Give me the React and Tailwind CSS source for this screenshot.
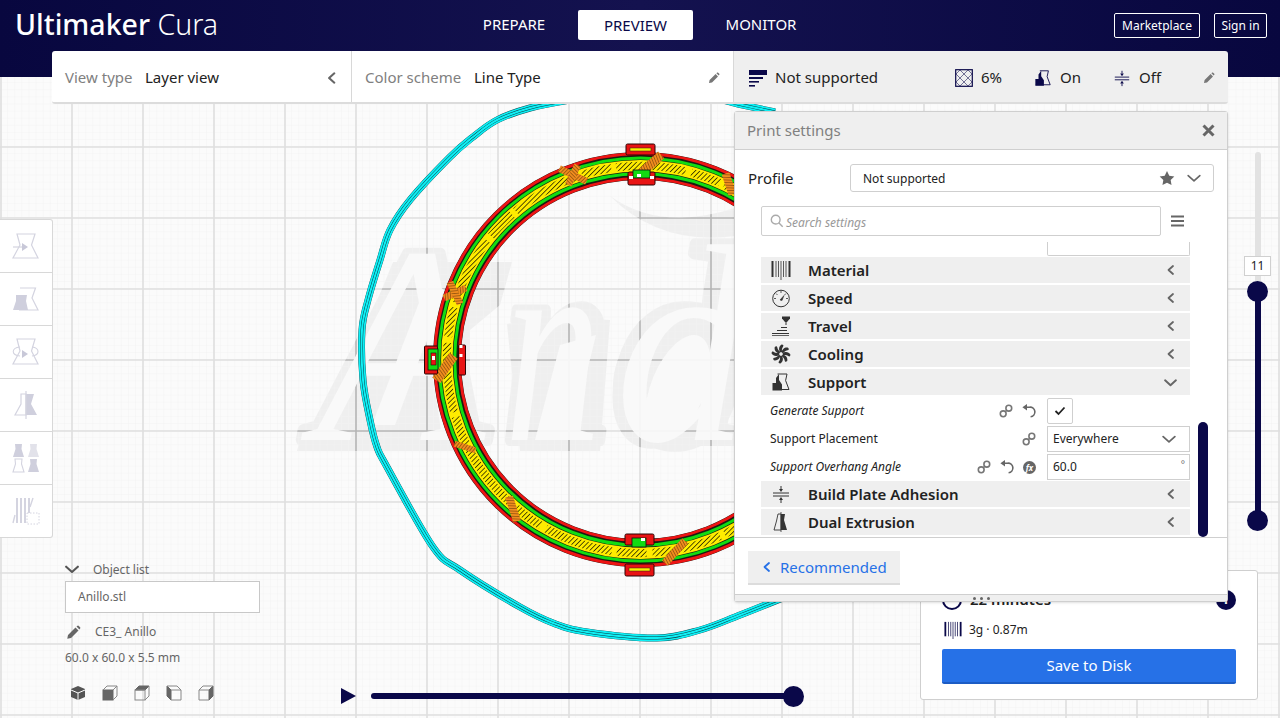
import React from "react";

const NAVY = "#0a0849";

function smooth(pts) {
  let d = `M${pts[0][0]} ${pts[0][1]}`;
  for (let i = 0; i < pts.length - 1; i++) {
    const p0 = pts[Math.max(i - 1, 0)];
    const p1 = pts[i];
    const p2 = pts[i + 1];
    const p3 = pts[Math.min(i + 2, pts.length - 1)];
    const c1 = [p1[0] + (p2[0] - p0[0]) / 6, p1[1] + (p2[1] - p0[1]) / 6];
    const c2 = [p2[0] - (p3[0] - p1[0]) / 6, p2[1] - (p3[1] - p1[1]) / 6];
    d += ` C${c1[0].toFixed(1)} ${c1[1].toFixed(1)} ${c2[0].toFixed(1)} ${c2[1].toFixed(1)} ${p2[0]} ${p2[1]}`;
  }
  return d;
}

function Viewport() {
  const xs = Array.from({ length: 19 }, (_, i) => 1 + 71 * i);
  const ys = Array.from({ length: 11 }, (_, i) => 5 + 71 * i);
  const skirt = smooth([
    [775, 112], [738, 104], [700, 95], [640, 90], [570, 100], [530, 108], [497, 120], [473, 137], [450, 157],
    [410, 200], [390, 230], [380, 260], [368, 300], [362, 330], [363, 380], [370, 420], [377, 447], [387, 467],
    [433, 547], [460, 570], [520, 607], [553, 623], [587, 632], [657, 638], [700, 630], [740, 615], [790, 595],
  ]);
  const Grid = () => (
    <>
      {xs.map((x) => <line key={"x" + x} x1={x} x2={x} y1="0" y2="718" />)}
      {ys.map((y) => <line key={"y" + y} y1={y} y2={y} x1="0" x2="1280" />)}
    </>
  );
  const Orange = ({ x, y, r, l = 28, w = 9 }) => (
    <rect x={x - l / 2} y={y - w / 2} width={l} height={w} fill="url(#orangeHatch)" transform={`rotate(${r} ${x} ${y})`} />
  );
  const Tab = ({ x, y, w, h }) => (
    <g>
      <rect x={x} y={y} width={w} height={h} rx="1.5" fill="#e81313" stroke="#2a0505" strokeWidth="1" />
      <rect x={x + 4} y={y + 4} width={w - 8} height="3" fill="#ffee00" stroke="#222" strokeWidth=".5" />
    </g>
  );
  const Letters = ({ weight }) => (
    <>
      <text transform="translate(316 440) scale(.98 1)" fontWeight={weight}>A</text>
      <text transform="translate(505 440) scale(.68 1)" fontWeight={weight}>n</text>
      <text transform="translate(615 440) scale(.95 1)" fontWeight={weight}>d</text>
    </>
  );
  return (
    <svg className="absolute inset-0" width="1280" height="718" viewBox="0 0 1280 718">
      <defs>
        <pattern id="minor" width="7.1" height="7.1" patternUnits="userSpaceOnUse" x="1" y="5">
          <path d="M7.1 0V7.1M0 7.1H7.1" stroke="#f3f3f3" strokeWidth="1" fill="none" />
        </pattern>
        <pattern id="hatch" width="3.4" height="3.4" patternUnits="userSpaceOnUse" patternTransform="rotate(45)">
          <rect width="3.4" height="3.4" fill="#ffec00" />
          <rect width=".8" height="3.4" fill="#2b2b00" />
        </pattern>
        <pattern id="orangeHatch" width="2.6" height="2.6" patternUnits="userSpaceOnUse" patternTransform="rotate(20)">
          <rect width="2.6" height="2.6" fill="#f08c1e" />
          <rect width=".7" height="2.6" fill="#8a4d0c" />
        </pattern>
        <mask id="ghost">
          <rect width="1280" height="718" fill="black" />
          <g fontFamily="'Liberation Serif',serif" fontStyle="italic" fontSize="282" fill="white" stroke="white" strokeWidth="12" strokeLinejoin="round">
            <Letters weight="700" />
          </g>
          <g fill="white">
            <path d="M393 262 H512 L500 305 L470 330 L470 451 H297 L300 440 L327 420 L353 360 Z" />
            <path d="M507 324 L560 317 L610 320 L600 451 H520 Z" />
            <ellipse cx="675" cy="386" rx="62" ry="66" />
          </g>
          <path d="M610 196 Q660 232 735 208 V236 Q660 246 610 196Z" fill="white" />
        </mask>
      </defs>
      <rect width="1280" height="718" fill="#fbfbfb" />
      <rect width="1280" height="718" fill="url(#minor)" />
      <g stroke="#dfdfdf" strokeWidth="1.6"><Grid /></g>

      <g mask="url(#ghost)">
        <rect width="1280" height="718" fill="#efefef" />
        <rect width="1280" height="718" fill="url(#minor)" opacity=".9" />
        <g stroke="#b4b4b4" strokeWidth="1.6"><Grid /></g>
      </g>
      <g fill="#fafafa" opacity=".94">
        <g fontFamily="'Liberation Serif',serif" fontStyle="italic" fontSize="282">
          <Letters weight="400" />
        </g>
        <ellipse cx="678" cy="388" rx="27" ry="56" transform="rotate(22 678 388)" />
        <path d="M427 282 L445 290 L395 425 L372 425 Z" />
        <path d="M560 345 L596 335 L570 440 L535 440 Z" />
      </g>

      <path d={skirt} fill="none" stroke="#0b4a52" strokeWidth="7" />
      <path d={skirt} fill="none" stroke="#0ff0f5" strokeWidth="6.4" />
      <path d={skirt} fill="none" stroke="#0b3a42" strokeWidth="2.9" />
      <path d={skirt} fill="none" stroke="#0ff0f5" strokeWidth="2" />

      <g fill="none">
        <circle cx="640.5" cy="359.5" r="193.5" stroke="#1b1b12" strokeWidth="28" />
        <circle cx="640.5" cy="359.5" r="205.8" stroke="#ee1414" strokeWidth="2.8" />
        <circle cx="640.5" cy="359.5" r="181.2" stroke="#ee1414" strokeWidth="2.8" />
        <circle cx="640.5" cy="359.5" r="201.6" stroke="#12dc12" strokeWidth="3" />
        <circle cx="640.5" cy="359.5" r="185.8" stroke="#12dc12" strokeWidth="3" />
        <circle cx="640.5" cy="359.5" r="193.7" stroke="#ffec00" strokeWidth="11.4" />
        <circle cx="640.5" cy="359.5" r="193.7" stroke="url(#hatch)" strokeWidth="8" strokeDasharray="70 6 30 5" />
      </g>

      <Orange x={573} y={175} r={25} l={30} w={7} />
      <Orange x={573} y={175} r={115} l={22} w={7} />
      <Orange x={650} y={165} r={-42} l={30} w={9} />
      <Orange x={729} y={184} r={72} l={22} w={8} />
      <Orange x={455} y={293} r={-25} l={24} w={7} />
      <Orange x={455} y={293} r={65} l={24} w={7} />
      <Orange x={445} y={368} r={-55} l={30} w={10} />
      <Orange x={465} y={447} r={18} l={22} w={6} />
      <Orange x={513} y={509} r={72} l={26} w={8} />
      <Orange x={675} y={552} r={-48} l={30} w={8} />

      <Tab x={626} y={144} w={29} h={11} />
      <rect x="628" y="172" width="27" height="13" rx="1.5" fill="#e81313" stroke="#2a0505" />
      <rect x="633" y="170" width="17" height="8" fill="#12dc12" stroke="#111" strokeWidth=".8" />
      <rect x="629" y="176" width="4" height="3" fill="#fff" />
      <rect x="650" y="176" width="4" height="3" fill="#fff" />
      <rect x="637" y="174" width="4" height="3" fill="#fff" />

      <Tab x={625} y={564} w={29} h={12} />
      <rect x="625" y="534" width="29" height="11" rx="1.5" fill="#e81313" stroke="#2a0505" />
      <rect x="632" y="538" width="14" height="9" fill="#12dc12" stroke="#111" strokeWidth=".8" />
      <rect x="641" y="538" width="4" height="3" fill="#fff" />

      <rect x="424.5" y="346" width="13" height="28" rx="1" fill="#e81313" stroke="#2a0505" />
      <rect x="428" y="349" width="10" height="21" fill="#12dc12" stroke="#111" strokeWidth=".8" />
      <rect x="431" y="353" width="5" height="12" fill="#e81313" stroke="#111" strokeWidth=".6" />
      <rect x="432" y="356" width="3" height="4" fill="#fff" />
      <rect x="458.5" y="345" width="7" height="30" rx="1" fill="#e81313" stroke="#2a0505" />
      <rect x="459.5" y="354" width="3" height="3" fill="#fff" />
      <rect x="459.5" y="345" width="3" height="3" fill="#fff" />
    </svg>
  );
}

const Chev = ({ dir = "left", cls = "", color = "#666", size = 12, sw = 1.8 }) => {
  const d = { left: "M8 2 L3.5 6 L8 10", right: "M4 2 L8.5 6 L4 10", down: "M1 4 L6 8.5 L11 4" }[dir];
  return (
    <svg width={size} height={size} viewBox="0 0 12 12" className={cls}>
      <path d={d} fill="none" stroke={color} strokeWidth={sw} strokeLinecap="round" strokeLinejoin="round" />
    </svg>
  );
};

const Pencil = ({ size = 12, color = "#777" }) => (
  <svg width={size} height={size} viewBox="0 0 12 12">
    <path d="M1 11 L1.6 8 L7.6 2 L10 4.4 L4 10.4 Z M8.4 1.2 L9.2.6 Q9.8.3 10.2.7 L11.3 1.8 Q11.7 2.3 11.3 2.8 L10.7 3.6 Z" fill={color} />
  </svg>
);

const Support = ({ c = NAVY, s = 20 }) => (
  <svg width={s} height={s} viewBox="0 0 20 20">
    <path d="M6.5 2 H16 L14.6 8.5 L18 17.5 H2" fill="none" stroke={c} strokeWidth="1" />
    <path d="M1.5 18.5 V11 H5 V6 L8 2 V8 L11 12.5 V18.5 Z" fill={c} />
  </svg>
);
const Adhesion = ({ c = NAVY, s = 20 }) => (
  <svg width={s} height={s} viewBox="0 0 20 20" fill={c} stroke={c}>
    <path d="M2 9 H18 M2 12 H18" strokeWidth="1" fill="none" />
    <path d="M10 2 V5" strokeWidth="1" /><path d="M8 5 H12 L10 8 Z" stroke="none" />
    <path d="M10 16 V19" strokeWidth="1" /><path d="M8 16 H12 L10 13 Z" stroke="none" />
  </svg>
);
const Barcode = ({ c = "#333", s = 20 }) => (
  <svg width={s} height={s} viewBox="0 0 20 20" stroke={c} fill="none">
    <path d="M1.5 1 V17" strokeWidth="2" /><path d="M18.5 1 V17" strokeWidth="2" />
    <path d="M5 1 V17 M7.5 1 V17 M10 1 V20 M12.5 1 V17 M15 1 V17" strokeWidth=".8" />
  </svg>
);
const Gauge = () => (
  <svg width="20" height="20" viewBox="0 0 20 20" fill="none" stroke="#333">
    <circle cx="10" cy="10.5" r="8.3" strokeWidth="1" />
    <path d="M10 2.5 V5 M3 10.5 H5 M15 10.5 H17 M5 5.5 L6.5 7 M15 5.5 L13.5 7" strokeWidth=".8" />
    <path d="M9 12 L13 7.5 L11 12.5 Z" fill="#333" strokeWidth=".6" />
  </svg>
);
const Travel = () => (
  <svg width="20" height="20" viewBox="0 0 20 20" fill="#333">
    <path d="M11 .5 H19 V2.5 L16 6 H14 L11 2.5 Z" />
    <rect x="14.5" y="6" width="1" height="3" />
    <path d="M10 11 H16 V12 H10 Z M6 14 H16 V15 H6 Z M1 17 H18 V18 H1 Z M1 19 H18 V19.7 H1 Z" />
  </svg>
);
const Fan = () => (
  <svg width="20" height="20" viewBox="0 0 20 20" fill="#333">
    {[0, 45, 90, 135, 180, 225, 270, 315].map((a) => (
      <path key={a} d="M9.6 8.6 C7 6 8 2 10.6 .6 C12.6 .6 12.8 1.8 12 2.8 C10.6 4.6 10.8 6.6 11.2 8.6 Z" transform={`rotate(${a} 10 10)`} />
    ))}
    <circle cx="10" cy="10" r="1.7" fill="#efefef" />
  </svg>
);
const Dual = () => (
  <svg width="20" height="20" viewBox="0 0 20 20">
    <path d="M7 2 H10 V18 H3 L5.5 9 Z" fill="none" stroke="#333" strokeWidth=".9" />
    <path d="M10 2 H14 L13 8 L16 18 H10 Z" fill="#333" />
    <path d="M10 0 V20" stroke="#333" strokeWidth=".8" />
  </svg>
);
const Infill = () => (
  <svg width="18" height="18" viewBox="0 0 18 18" fill="none" stroke={NAVY} strokeWidth=".55">
    <rect x=".7" y=".7" width="16.6" height="16.6" strokeWidth="1.2" />
    <path d="M1 5 L5 1 M13 1 L17 5 M17 13 L13 17 M5 17 L1 13 M5 1 L17 13 M13 1 L1 13 M1 5 L13 17 M17 5 L5 17" />
  </svg>
);
const Profile = () => (
  <svg width="18" height="18" viewBox="0 0 18 18" fill={NAVY}>
    <rect x="0" y="1" width="18" height="5" />
    <rect x="0" y="8" width="14" height="2" />
    <rect x="0" y="12" width="10" height="1.6" />
    <rect x="0" y="16" width="6" height="1.6" />
  </svg>
);
const Link = () => (
  <svg width="14" height="14" viewBox="0 0 14 14" fill="none" stroke="#777" strokeWidth="1.6">
    <circle cx="4.2" cy="9.8" r="2.9" /><circle cx="9.8" cy="4.2" r="2.9" /><path d="M6 8 L8 6" />
  </svg>
);
const Undo = () => (
  <svg width="14" height="14" viewBox="0 0 14 14" fill="none">
    <path d="M3.5 3.2 H7.5 A4.8 4.8 0 0 1 8.6 12.8" stroke="#666" strokeWidth="1.6" />
    <path d="M5 0 V6.6 L.4 3.3 Z" fill="#666" />
  </svg>
);
const Fx = () => (
  <span className="w-[13px] h-[13px] rounded-full bg-[#666] text-white text-[8px] italic leading-[13px] text-center font-bold">fx</span>
);

function Logo() {
  return (
    <div className="text-[28.5px] leading-none text-white whitespace-nowrap">
      <span className="font-medium">Ultimaker</span> <span className="font-light">Cura</span>
    </div>
  );
}

function TopBar() {
  return (
    <div className="absolute left-[52px] top-[51px] w-[1176px] h-[53px] flex rounded-[3px] text-[15px] overflow-hidden border-b-2 border-[#dcdcdc]">
      <div className="w-[300px] bg-white border-r border-[#d8d8d8] flex items-center pl-[13px] pr-[12px] pt-[2px]">
        <span className="text-[#808080] w-[80px]">View type</span>
        <span className="text-[#222]">Layer view</span>
        <Chev cls="ml-auto" color="#666" size={14} />
      </div>
      <div className="w-[381px] bg-white flex items-center pl-[13px] pr-[13px] pt-[2px]">
        <span className="text-[#808080] w-[109px]">Color scheme</span>
        <span className="text-[#222]">Line Type</span>
        <span className="ml-auto"><Pencil /></span>
      </div>
      <div className="flex-1 bg-[#efefef] border-l border-[#d8d8d8] flex items-center pl-[15px] pr-[13px] pt-[2px] text-[#222]">
        <Profile />
        <span className="ml-[8px] w-[180px]">Not supported</span>
        <Infill />
        <span className="ml-[8px] w-[53px]">6%</span>
        <Support s={18} />
        <span className="ml-[8px] w-[53px]">On</span>
        <Adhesion s={18} />
        <span className="ml-[8px]">Off</span>
        <span className="ml-auto"><Pencil /></span>
      </div>
    </div>
  );
}

function Header() {
  return (
    <div className="absolute left-0 top-0 w-[1280px] h-[77px] bg-gradient-to-r from-[#08073f] via-[#14124f] to-[#08073f]">
      <div className="flex items-start h-[51px] pl-[15px] pr-[13px]">
        <div className="w-[400px] pt-[10px]"><Logo /></div>
      </div>
      <div className="absolute left-[464px] top-[10px] flex items-center text-[15px] text-white">
        <span className="w-[100px] text-center -mt-[1px]">PREPARE</span>
        <span className="ml-[14px] w-[115px] h-[30px] rounded-[2px] bg-white text-[#0a0849] flex items-center justify-center">PREVIEW</span>
        <span className="ml-[14px] w-[108px] text-center -mt-[1px]">MONITOR</span>
      </div>
      <div className="absolute right-[13px] top-[13px] flex gap-[14px] text-[12px] text-white">
        <span className="w-[86px] h-[25px] border border-white rounded-[2px] flex items-center justify-center">Marketplace</span>
        <span className="w-[53px] h-[25px] border border-white rounded-[2px] flex items-center justify-center">Sign in</span>
      </div>
    </div>
  );
}

const T = "#d4d4e0";
const tools = [
  <g key="1"><path d="M10 4 H28 L24.5 15 L31 28 H6 L13 15 Z" fill="none" stroke={T} strokeWidth="1.2" /><path d="M6 17 H16" stroke={T} strokeWidth="1.2" /><path d="M15 13 L21 17 L15 21 Z" fill="#c8c8d8" /></g>,
  <g key="2"><path d="M13 5 H28.5 L25 15 L31 27 H12" fill="none" stroke={T} strokeWidth="1.2" /><path d="M9 12 H20 L19 18 L21 27 H6 L9 18 Z" fill="#cfcfdd" /></g>,
  <g key="3"><path d="M10 3 H28 L24.5 15 L31 28 H6 L13 15 Z" fill="none" stroke={T} strokeWidth="1.2" /><path d="M13 11 C4 12 4 19 13 20 M25 11 C33 12 33 19 25 20" fill="none" stroke={T} strokeWidth="1.1" /><path d="M15 14 L21 18 L15 22 Z" fill="#c8c8d8" /></g>,
  <g key="4"><path d="M14 5 H19 V26 H8 L14 15 Z" fill="none" stroke={T} strokeWidth="1.2" /><path d="M19 5 H27 L24 15 L30 26 H19 Z" fill="#cfcfdd" /><path d="M19 2 V30" stroke={T} strokeWidth="1.2" /></g>,
  <g key="5"><path d="M8 2 H15 L14.5 7 L17 15 H6 L8.5 7 Z" fill="#cfcfdd" /><path d="M23 2 H30 L29.5 7 L32 15 H21 L23.5 7 Z" fill="#e2e2ea" /><path d="M8 17 H15 L14.5 22 L17 30 H6 L8.5 22 Z" fill="none" stroke={T} strokeWidth="1.1" /><path d="M23 17 H30 L29.5 22 L32 30 H21 L23.5 22 Z" fill="#cfcfdd" /></g>,
  <g key="6"><path d="M10 3 V28 M14 3 V28 M18 3 V28 M22 3 V18" stroke={T} strokeWidth="2" /><path d="M26 3 L23 12 M8 20 L6 28" stroke={T} strokeWidth="1.4" /><rect x="20" y="18" width="12" height="11" fill="#fff" stroke={T} strokeDasharray="1.5 1.5" /></g>,
];

function LeftTools() {
  return (
    <div className="absolute left-0 top-[219px] w-[53px] h-[319px] bg-white rounded-r-[3px] border border-l-0 border-[#d8d8d8] flex flex-col divide-y divide-[#d8d8d8]">
      {tools.map((t, i) => (
        <div key={i} className="flex-1 flex items-center justify-center">
          <svg width="38" height="33" viewBox="0 0 38 33">{t}</svg>
        </div>
      ))}
    </div>
  );
}

function ObjectInfo() {
  const C = "#666";
  const cubes = [
    <g key="a"><path d="M8 1 L15 4 V12 L8 15 L1 12 V4 Z" fill="#555" /><path d="M1 5 L8 8 L15 5 M8 8 V15" stroke="#fff" fill="none" /></g>,
    <g key="b"><rect x="1" y="5" width="10" height="10" fill={C} stroke={C} /><path d="M1 5 L5 1 H15 V11 L11 15 M11 5 L15 1" fill="none" stroke="#888" /></g>,
    <g key="c"><path d="M1 5 L5 1 H15 L11 5 Z" fill={C} stroke={C} /><rect x="1" y="5" width="10" height="10" fill="none" stroke="#888" /><path d="M15 1 V11 L11 15" fill="none" stroke="#888" /></g>,
    <g key="d"><path d="M1 1 L5 5 V15 L1 11 Z" fill={C} stroke={C} /><path d="M1 1 H11 L15 5 V15 H5 M5 5 H15" fill="none" stroke="#888" /></g>,
    <g key="e"><path d="M15 1 V11 L11 15 V5 Z" fill={C} stroke={C} /><path d="M1 5 L5 1 H15 M1 5 H11 M1 5 V15 H11" fill="none" stroke="#888" /></g>,
  ];
  return (
    <div className="absolute left-[65px] top-[560px] w-[195px] text-[12px] text-[#666]">
      <div className="flex items-center h-[18px]">
        <Chev dir="down" size={14} color="#555" />
        <span className="ml-[14px] mt-[2px]">Object list</span>
      </div>
      <div className="mt-[3px] h-[32px] bg-white border border-[#c8c8c8] pl-[12px] flex items-center">Anillo.stl</div>
      <div className="mt-[9px] h-[20px] flex items-center">
        <span className="ml-[1px]"><Pencil size={15} color="#666" /></span>
        <span className="ml-[14px]">CE3_ Anillo</span>
      </div>
      <div className="mt-[7px] h-[18px] flex items-center">60.0 x 60.0 x 5.5 mm</div>
      <div className="mt-[18px] ml-[5px] flex gap-[16px]">
        {cubes.map((c, i) => <svg key={i} width="16" height="16" viewBox="0 0 16 16">{c}</svg>)}
      </div>
    </div>
  );
}

function Timeline() {
  return (
    <div className="absolute left-[340px] top-[686px] w-[464px] h-[20px] flex items-center">
      <svg width="17" height="18" viewBox="0 0 17 18"><path d="M1 1 L16 9 L1 17 Z" fill={NAVY} /></svg>
      <div className="ml-[14px] flex-1 h-[6px] bg-[#0a0849] rounded-[3px]" />
      <div className="-ml-[10px] w-[21px] h-[21px] rounded-full bg-[#0a0849]" />
    </div>
  );
}

function LayerSlider() {
  return (
    <div className="absolute left-[1244px] top-[152px] w-[27px] h-[380px] flex flex-col items-center">
      <div className="w-[6px] h-[104px] bg-[#e2e2e2] rounded-t-[3px]" />
      <div className="w-[27px] h-[20px] bg-white border border-[#d0d0d0] text-[12px] text-[#222] flex items-center justify-center">11</div>
      <div className="w-[6px] h-[5px] bg-[#e2e2e2]" />
      <div className="w-[21px] h-[21px] rounded-full bg-[#0a0849] shrink-0" />
      <div className="w-[6px] -my-[2px] h-[212px] bg-[#0a0849] shrink-0" />
      <div className="w-[21px] h-[21px] rounded-full bg-[#0a0849] shrink-0" />
    </div>
  );
}

function SaveCard() {
  return (
    <div className="absolute left-[920px] top-[570px] w-[338px] h-[130px] bg-white border border-[#cfcfcf] rounded-[3px] pl-[21px] pr-[21px]">
      <div className="h-[38px] pt-[19px] flex items-center">
        <span className="w-[20px] h-[20px] rounded-full border-2 border-[#0a0849]" />
        <span className="ml-[8px] text-[15px] font-semibold text-[#222]">22 minutes</span>
        <span className="ml-auto w-[20px] h-[20px] rounded-full bg-[#0a0849] text-white text-[13px] font-bold flex items-center justify-center">i</span>
      </div>
      <div className="mt-[9px] h-[24px] flex items-center pl-[2px]">
        <Barcode c={NAVY} s={18} />
        <span className="ml-[7px] text-[12px] text-[#222]">3g · 0.87m</span>
      </div>
      <div className="mt-[7px] h-[35px] bg-[#2671e7] border-b-2 border-[#1c5cc4] rounded-[2px] text-white text-[15px] flex items-center justify-center">Save to Disk</div>
    </div>
  );
}

const Cat = ({ icon, label, open }) => (
  <div className="h-[26px] bg-[#efefef] flex items-center pl-[10px] pr-[13px] shrink-0">
    <span className="w-[20px] h-[20px] flex items-center justify-center">{icon}</span>
    <span className="ml-[17px] text-[15px] font-semibold text-[#222]">{label}</span>
    <Chev cls="ml-auto" dir={open ? "down" : "left"} color="#666" size={open ? 13 : 12} />
  </div>
);

const Row = ({ label, italic, children, ctl }) => (
  <div className="h-[28px] flex items-center shrink-0 pl-[9px] text-[12px] text-[#222]">
    <span className={italic ? "italic" : ""}>{label}</span>
    <div className="ml-auto flex items-center gap-[9px] mr-[11px]">{children}</div>
    <div className="w-[143px]">{ctl}</div>
  </div>
);

function PrintSettings() {
  return (
    <div className="absolute left-[734px] top-[111px] w-[494px] h-[491px] bg-white border border-[#cfcfcf] rounded-[3px] flex flex-col shadow-sm">
      <div className="h-[38px] shrink-0 bg-[#efefef] border-b border-[#cfcfcf] flex items-center pl-[12px] pr-[12px]">
        <span className="text-[15px] text-[#808080]">Print settings</span>
        <svg className="ml-auto" width="13" height="13" viewBox="0 0 13 13"><path d="M1.5 1.5 L11.5 11.5 M11.5 1.5 L1.5 11.5" stroke="#666" strokeWidth="3" /></svg>
      </div>
      <div className="mt-[14px] h-[28px] shrink-0 flex items-center pl-[13px] pr-[13px]">
        <span className="w-[102px] text-[15px] text-[#222]">Profile</span>
        <div className="flex-1 h-[28px] border border-[#cfcfcf] rounded-[3px] flex items-center pl-[12px] pr-[12px] text-[12px] text-[#222]">
          <span className="mt-[2px]">Not supported</span>
          <svg className="ml-auto" width="16" height="16" viewBox="0 0 24 24"><path d="M12 1.5 L15.4 8.5 L23 9.6 L17.5 15 L18.8 22.6 L12 19 L5.2 22.6 L6.5 15 L1 9.6 L8.6 8.5 Z" fill="#666" /></svg>
          <Chev cls="ml-[12px]" dir="down" color="#666" size={14} sw={1.4} />
        </div>
      </div>
      <div className="mt-[14px] h-[30px] shrink-0 flex items-center pl-[26px]">
        <div className="w-[400px] h-[30px] border border-[#cfcfcf] rounded-[2px] flex items-center pl-[8px] text-[12px] italic text-[#999]">
          <svg width="14" height="14" viewBox="0 0 16 16" fill="none" stroke="#aaa" strokeWidth="1.6"><circle cx="6.5" cy="6.5" r="5" /><path d="M10 10 L14.5 14.5" /></svg>
          <span className="ml-[2px] mt-[3px]">Search settings</span>
        </div>
        <svg className="ml-[10px]" width="13" height="12" viewBox="0 0 13 12"><path d="M0 1.5H13 M0 6H13 M0 10.5H13" stroke="#666" strokeWidth="2" /></svg>
      </div>
      <div className="mt-[6px] relative pl-[26px] pr-[37px] flex-1 min-h-0 flex flex-col gap-[2px]">
        <div className="-mb-[1px] ml-[286px] w-[143px] h-[14px] border border-t-0 border-[#cfcfcf] rounded-b-[2px] shrink-0" />
        <Cat icon={<Barcode />} label="Material" />
        <Cat icon={<Gauge />} label="Speed" />
        <Cat icon={<Travel />} label="Travel" />
        <Cat icon={<Fan />} label="Cooling" />
        <Cat icon={<Support c="#333" />} label="Support" open />
        <div className="flex flex-col shrink-0 -mb-[2px]">
          <Row label="Generate Support" italic ctl={
            <span className="w-[26px] h-[26px] bg-white border border-[#cfcfcf] rounded-[2px] flex items-center justify-center">
              <svg width="12" height="10" viewBox="0 0 12 10"><path d="M1.5 5 L4.5 8 L10.5 1.5" fill="none" stroke="#222" strokeWidth="1.8" /></svg>
            </span>}>
            <Link /><Undo />
          </Row>
          <Row label="Support Placement" ctl={
            <span className="h-[26px] bg-white border border-[#cfcfcf] flex items-center pl-[5px] pr-[13px]">
              Everywhere<Chev cls="ml-auto" dir="down" color="#666" size={14} sw={1.5} />
            </span>}>
            <Link />
          </Row>
          <Row label="Support Overhang Angle" italic ctl={
            <span className="h-[26px] bg-white border border-[#cfcfcf] flex items-center pl-[5px] pr-[4px] relative">
              60.0<span className="ml-auto mb-[6px] text-[10px] text-[#777]">°</span>
            </span>}>
            <Link /><Undo /><Fx />
          </Row>
        </div>
        <Cat icon={<Adhesion c="#333" />} label="Build Plate Adhesion" />
        <Cat icon={<Dual />} label="Dual Extrusion" />
        <div className="absolute right-[19px] bottom-0 w-[10px] h-[115px] rounded-[5px] bg-[#0a0849]" />
      </div>
      <div className="h-[57px] shrink-0 border-t border-[#cfcfcf] pl-[13px] pt-[13px]">
        <div className="w-[152px] h-[34px] bg-[#efefef] border-b-2 border-[#dcdcdc] flex items-center pl-[13px] text-[15px] text-[#2671e7]">
          <Chev color="#2671e7" />
          <span className="ml-[7px]">Recommended</span>
        </div>
      </div>
      <div className="h-[7px] shrink-0 bg-[#efefef] border-t border-[#cfcfcf] flex items-center justify-center gap-[4px]">
        <span className="w-[3px] h-[3px] rounded-full bg-[#666]" />
        <span className="w-[3px] h-[3px] rounded-full bg-[#666]" />
        <span className="w-[3px] h-[3px] rounded-full bg-[#666]" />
      </div>
    </div>
  );
}

export default function App() {
  return (
    <div className="relative w-[1280px] h-[718px] overflow-hidden bg-[#fbfbfb] font-['Noto_Sans',sans-serif]">
      <Viewport />
      <Header />
      <TopBar />
      <LeftTools />
      <ObjectInfo />
      <Timeline />
      <LayerSlider />
      <SaveCard />
      <PrintSettings />
    </div>
  );
}
